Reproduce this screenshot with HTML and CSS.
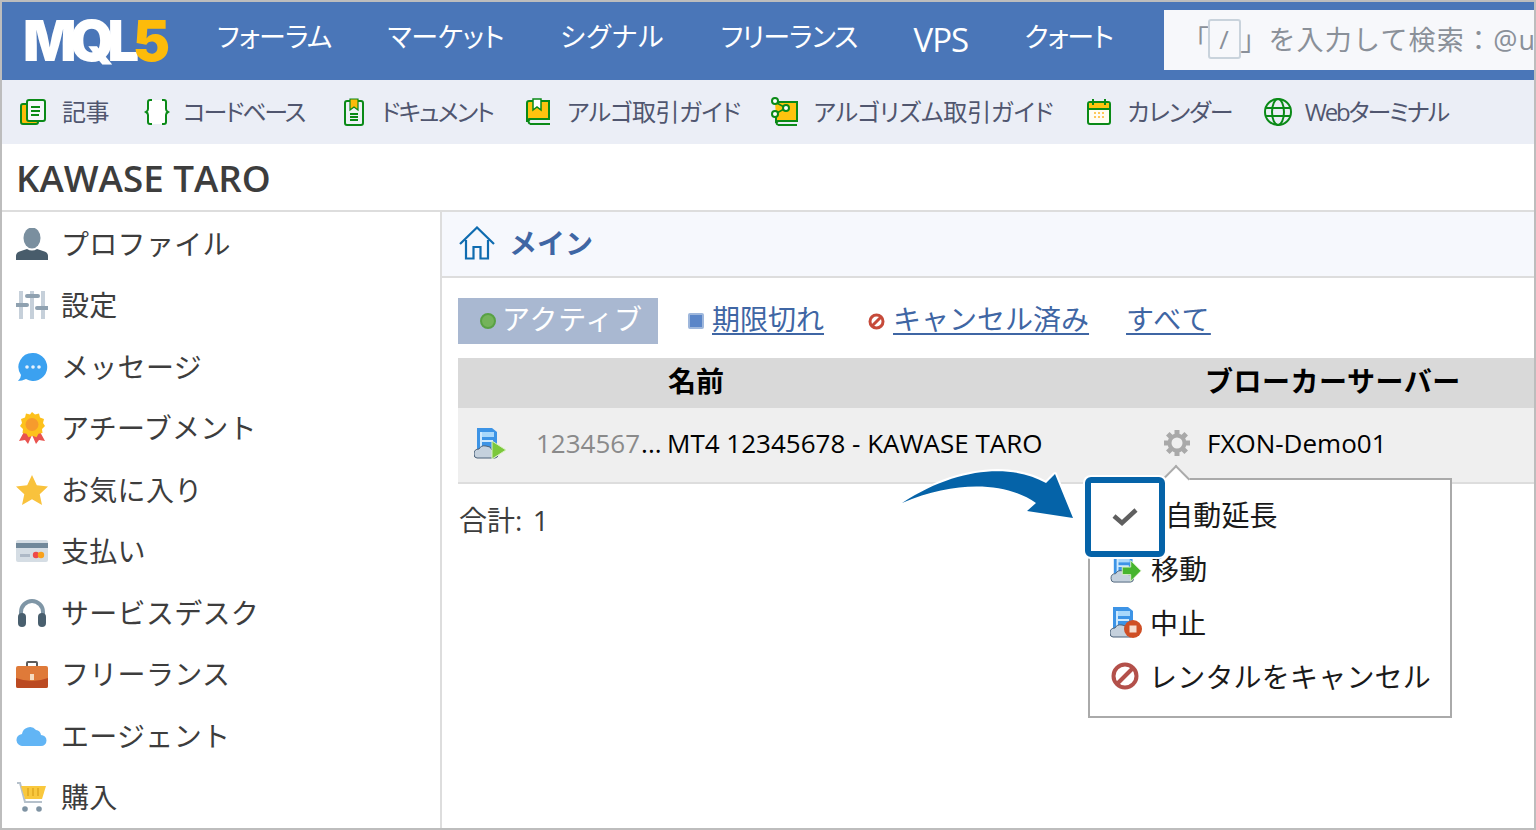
FILE: index.html
```html
<!DOCTYPE html>
<html lang="ja">
<head>
<meta charset="utf-8">
<title>MQL5 KAWASE TARO</title>
<link rel="stylesheet" href="styles.css">
</head>
<body>
<div class="frame">
  <header class="topbar">
    <div class="logo">MQL<span class="logo-five">5</span></div>
    <nav class="topnav">
      <a>フォーラム</a><a>マーケット</a><a>シグナル</a><a>フリーランス</a><a class="vps">VPS</a><a>クォート</a>
    </nav>
    <div class="search">「<span class="key">/</span>」を入力して検索：@username</div>
  </header>

  <nav class="subnav">
    <a><svg width="26" height="28" viewBox="0 0 26 28"><rect x="1" y="6" width="17" height="20" rx="2" fill="#fdbb0a" stroke="#0a8a17" stroke-width="2"/><rect x="7" y="2" width="18" height="21" rx="2" fill="#f4f6fb" stroke="#0a8a17" stroke-width="2"/><path d="M11 9h9M11 13h9M11 17h8" stroke="#0a8a17" stroke-width="2"/></svg>記事</a>
    <a><svg width="26" height="28" viewBox="0 0 26 28"><path d="M6 2q-2 0-2 2v7q0 2-2 3 2 1 2 3v7q0 2 2 2h14q2 0 2-2v-7q0-2 2-3-2-1-2-3V4q0-2-2-2z" fill="#fff"/><path d="M8 2H6Q4 2 4 4v7q0 2-2 3 2 1 2 3v7q0 2 2 2h2M18 2h2q2 0 2 2v7q0 2 2 3-2 1-2 3v7q0 2-2 2h-2" fill="none" stroke="#0a8a17" stroke-width="2"/></svg>コードベース</a>
    <a><svg width="20" height="28" viewBox="0 0 20 28"><rect x="1" y="3" width="18" height="24" rx="2" fill="#eef1f7" stroke="#0a8a17" stroke-width="2"/><path d="M6 1h8v11l-4-3-4 3z" fill="#fdbb0a" stroke="#0a8a17" stroke-width="1.200"/><path d="M6 16h8M6 19h8M6 22h8" stroke="#0a8a17" stroke-width="2"/></svg>ドキュメント</a>
    <a><svg width="25" height="28" viewBox="0 0 25 28"><path d="M3 3h20v18H4q-3 0-3 3V5q0-2 2-2z" fill="#fdc30f" stroke="#0a8a17" stroke-width="2"/><path d="M4 21h20M4 26h20M4 21q-3 2.500 0 5" fill="none" stroke="#0a8a17" stroke-width="2"/><path d="M7 1h8v11l-4-3-4 3z" fill="#fff" stroke="#0a8a17" stroke-width="1.500"/></svg>アルゴ取引ガイド</a>
    <a><svg width="28" height="30" viewBox="0 0 28 30"><path d="M5 5h22v19H9q-3 0-3 2v-6" fill="#fdc30f" stroke="#0a8a17" stroke-width="2"/><path d="M8 24h19M8 28h19M8 24q-3 2 0 4" fill="none" stroke="#0a8a17" stroke-width="2"/><path d="M5 5l11 6-11 6" fill="none" stroke="#0a8a17" stroke-width="1.500"/><g fill="#fff" stroke="#0a8a17" stroke-width="2"><circle cx="5" cy="4" r="3"/><circle cx="16" cy="11" r="3"/><circle cx="5" cy="17" r="3"/></g></svg>アルゴリズム取引ガイド</a>
    <a><svg width="24" height="28" viewBox="0 0 24 28"><rect x="1" y="4" width="22" height="22" rx="2" fill="#fffdf3" stroke="#0a8a17" stroke-width="2"/><path d="M2 5h20v6H2z" fill="#fdc30f"/><path d="M6 1v6M18 1v6M2 11h20" stroke="#0a8a17" stroke-width="2"/><path d="M7 15h2M11 15h2M15 15h2M7 19h2M11 19h2M15 19h2" stroke="#fdc85a" stroke-width="2"/></svg>カレンダー</a>
    <a><svg width="28" height="28" viewBox="0 0 28 28" fill="none" stroke="#0a8a17" stroke-width="2"><circle cx="14" cy="14" r="13"/><ellipse cx="14" cy="14" rx="6" ry="13"/><path d="M2 10h24M2 18h24"/></svg>Webターミナル</a>
  </nav>

  <h1 class="pagetitle">KAWASE TARO</h1>

  <div class="columns">
    <aside class="sidebar">
      <a><svg width="32" height="32" viewBox="0 0 32 32"><ellipse cx="16" cy="10" rx="8.500" ry="10.500" fill="#7a8f9f"/><path d="M0 32v-4q0-4 5-5l6-2q5 3 10 0l6 2q5 1 5 5v4z" fill="#485c6b"/></svg>プロファイル</a>
      <a><svg width="32" height="28" viewBox="0 0 32 28"><path d="M5 0v28M16 0v28M27 0v28" stroke="#c6d0da" stroke-width="4"/><path d="M0 14h11M11 5h11M21 17h11" stroke="#8fa1b0" stroke-width="4" stroke-linecap="round"/></svg>設定</a>
      <a><svg width="32" height="30" viewBox="0 0 32 30"><path d="M17 1a14 14 0 1 1-7 26q-4 2-8 2 3-3 3-6A14 14 0 0 1 17 1z" fill="#3ba1f0"/><circle cx="11" cy="15" r="1.800" fill="#e5f2fd"/><circle cx="17" cy="15" r="1.800" fill="#e5f2fd"/><circle cx="23" cy="15" r="1.800" fill="#e5f2fd"/></svg>メッセージ</a>
      <a><svg width="28" height="33" viewBox="0 0 28 33"><path d="M7 18L1 29l6-1 3 4 4-9 4 9 3-4 6 1-6-11z" fill="#e9534f"/><path d="M14 0l3 2.500 4-1 1 4 4 1.500-1 4 2 3-3 3 .5 4-4 .8-2 3.400-4-1.500-4 1.500-2-3.400-4-.8.500-4-3-3 2-3-1-4 4-1.500 1-4 4 1z" fill="#fdc11c"/><circle cx="14" cy="12.500" r="6.500" fill="#f69b2d"/></svg>アチーブメント</a>
      <a><svg width="32" height="30" viewBox="0 0 32 30"><path d="M16 0l4.800 10.300L32 11.500l-8.300 7.700L26 30l-10-5.700L6 30l2.300-10.800L0 11.500l11.200-1.200z" fill="#f9c23c"/></svg>お気に入り</a>
      <a><svg width="32" height="22" viewBox="0 0 32 22"><rect width="32" height="22" rx="2" fill="#d5dde4"/><rect y="3" width="32" height="5" fill="#71889a"/><rect x="4" y="14" width="10" height="3" fill="#aeb9c6"/><circle cx="20" cy="15" r="3.200" fill="#ee4b4b"/><circle cx="25" cy="15" r="3.200" fill="#f9a11b"/></svg>支払い</a>
      <a><svg width="30" height="28" viewBox="0 0 30 28"><path d="M4 16v-3a11 11 0 0 1 22 0v3" fill="none" stroke="#7f96a6" stroke-width="4"/><rect x="1" y="14" width="8" height="14" rx="4" fill="#495f6e"/><rect x="21" y="14" width="8" height="14" rx="4" fill="#495f6e"/></svg>サービスデスク</a>
      <a><svg width="32" height="27" viewBox="0 0 32 27"><path d="M11 5V2q0-1 1-1h8q1 0 1 1v3" fill="none" stroke="#5c5c5c" stroke-width="2"/><rect y="5" width="32" height="22" rx="2" fill="#df7a39"/><path d="M0 17q16 6 32 0v8q0 2-2 2H2q-2 0-2-2z" fill="#bb4a22"/><rect x="14" y="13" width="4" height="6" fill="#f6dcc0"/></svg>フリーランス</a>
      <a><svg width="30" height="20" viewBox="0 0 30 20"><path d="M6 20a6 6 0 0 1-1-12 8 8 0 0 1 14-4 6 6 0 0 1 5 5 5.500 5.500 0 0 1 0 11z" fill="#62b5f5"/></svg>エージェント</a>
      <a><svg width="32" height="30" viewBox="0 0 32 30"><path d="M1 1h3l5 19h17" fill="none" stroke="#b6c1cb" stroke-width="2"/><path d="M5 4h25l-4 13H9z" fill="#f9c83d"/><path d="M12 6v8M17 6v8M22 6v8" stroke="#e0a820" stroke-width="1.500"/><circle cx="9" cy="27" r="2.800" fill="#7f93a3"/><circle cx="23" cy="27" r="2.800" fill="#7f93a3"/></svg>購入</a>
    </aside>

    <main class="content">
      <div class="crumb"><svg width="36" height="34" viewBox="0 0 36 34" fill="none" stroke="#0f6cb0" stroke-width="2.200"><path d="M1 18L18 1.500 35 18M7 14v18.500h7.500V21h7v11.500H29V14"/></svg>メイン</div>

      <div class="panel">
        <div class="tabs">
          <span class="tab active"><i class="dot-green"></i>アクティブ</span>
          <a class="tab"><i class="dot-blue"></i><u>期限切れ</u></a>
          <a class="tab tab-cancel"><svg width="17" height="17" viewBox="0 0 17 17" fill="none" stroke="#c64a3a" stroke-width="3"><circle cx="8.500" cy="8.500" r="6.500"/><path d="M4 13l9-9"/></svg><u>キャンセル済み</u></a>
          <a class="tab tab-all"><u>すべて</u></a>
        </div>

        <div class="grid">
          <div class="th"></div><div class="th"></div><div class="th">名前</div><div class="th"></div><div class="th th-server">ブローカーサーバー</div>
          <div class="td td-ico"><svg width="32" height="32" viewBox="0 0 32 32"><use href="#vps"/><path d="M18 14l14 9-14 9z" fill="#7cc83c" stroke="#d9f0c4"/></svg></div>
          <div class="td"><span class="num">1234567</span>...</div>
          <div class="td">MT4 12345678 - KAWASE TARO</div>
          <div class="td"><svg width="28" height="28" viewBox="0 0 28 28"><path d="M14 1v5M14 22v5M1 14h5M22 14h5M4.800 4.800l3.500 3.500M19.700 19.700l3.500 3.500M23.200 4.800l-3.500 3.500M8.300 19.700l-3.500 3.500" stroke="#a9a9a9" stroke-width="5"/><circle cx="14" cy="14" r="7.500" fill="none" stroke="#a9a9a9" stroke-width="4"/></svg></div>
          <div class="td">FXON-Demo01</div>
        </div>
        <p class="total">合計: 1</p>
      </div>
    </main>
  </div>

  <div class="menu">
    <i class="caret"></i>
    <a class="menu-first">自動延長</a>
    <a><svg width="32" height="30" viewBox="0 0 32 32"><use href="#vps"/><path d="M12 15h9V8l11 11-11 11v-7h-9z" fill="#47b52e" stroke="#d9f0c4"/></svg>移動</a>
    <a class="menu-halt"><svg width="32" height="32" viewBox="0 0 32 32"><use href="#vps"/><circle cx="23" cy="23" r="9" fill="#cf4f25"/><rect x="19.500" y="19.500" width="7" height="7" fill="#f5ddd0"/></svg>中止</a>
    <a class="menu-stop"><svg width="28" height="28" viewBox="0 0 28 28" fill="none" stroke="#b3504a" stroke-width="4"><circle cx="14" cy="14" r="11.500"/><path d="M6 22L22 6"/></svg>レンタルをキャンセル</a>
  </div>

  <svg class="arrow" width="190" height="70" viewBox="0 0 190 70"><path d="M4 42C60 5 115 3 148 22L157 13 175 57 129 50 138 42C110 22 60 18 4 42z" fill="#0563a8" stroke="#fff" stroke-width="4" stroke-linejoin="round" paint-order="stroke"/></svg>
  <div class="highlight"><svg width="26" height="20" viewBox="0 0 26 20"><path d="M2 9l8 7L24 3" fill="none" stroke="#5f5f5f" stroke-width="4.500"/></svg></div>

  <svg class="defs" width="0" height="0"><defs><g id="vps"><path d="M3 1h15l5 4v17H3z" fill="#3d94e6"/><path d="M7 5h13v5H7z" fill="#a9d8fb"/><path d="M7 5v18M7 14h12" stroke="#cfe9fd" stroke-width="2"/><path d="M3 31q-3 0-3-4 0-5 5-5 2-4 7-3 5 0 6 4 6 0 6 4 0 4-3 4z" fill="#c5d1dd" stroke="#4a6078"/></g></defs></svg>
</div>
</body>
</html>
```

FILE: styles.css
```css
* { box-sizing: border-box; }
html, body { margin: 0; height: 100%; background: #fff; }
body {
  font-family: "Open Sans", "Noto Sans CJK JP", sans-serif;
  color: #3d3d3d;
  overflow: hidden;
}
.frame {
  position: relative;
  width: 1536px;
  height: 830px;
  border: 2px solid #bdbdbd;
  overflow: hidden;
  display: flex;
  flex-direction: column;
}
svg { flex: none; display: block; }

/* top bar */
.topbar {
  height: 78px;
  flex: none;
  background: #4a76b8;
  display: flex;
  align-items: center;
  padding-left: 21px;
  color: #fff;
}
.logo {
  width: 194px;
  flex: none;
  font-family: "Inter", sans-serif;
  font-weight: 900;
  font-size: 56px;
  letter-spacing: -6.500px;
  line-height: 1;
  color: #fff;
}
.logo-five { color: #fdbb0a; }
.topnav {
  display: flex;
  gap: 56px;
  font-size: 27px;
  font-feature-settings: "palt";
  letter-spacing: -0.500px;
  width: 947px;
  flex: none;
  margin-top: -7px;
}
.topnav a:nth-child(1) { letter-spacing: -0.700px; }
.topnav a:nth-child(2) { letter-spacing: -0.300px; }
.topnav a:nth-child(3) { letter-spacing: 1px; }
.topnav a:nth-child(4) { letter-spacing: -0.900px; }
.topnav a:nth-child(6) { letter-spacing: -1px; }
.topnav .vps { font-size: 33px; letter-spacing: -1px; line-height: 40px; margin-top: 4px; }
.search {
  flex: 1;
  align-self: flex-start;
  margin-top: 8px;
  height: 60px;
  background: #f7f8fb;
  color: #8a9099;
  font-size: 27px;
  letter-spacing: 1.200px;
  white-space: nowrap;
  overflow: hidden;
  display: flex;
  align-items: center;
  padding: 0 0 3px 18px;
}
.key {
  flex: none;
  display: flex;
  align-items: center;
  justify-content: center;
  width: 33px;
  height: 40px;
  margin-left: -2px;
  margin-right: -1px;
  border: 2px solid #c9d3dc;
  border-radius: 3px;
  font-size: 26px;
  font-family: "Open Sans", sans-serif;
}

/* secondary nav */
.subnav {
  height: 64px;
  flex: none;
  background: #ebeef6;
  display: flex;
  align-items: center;
  padding-left: 18px;
  font-size: 24px;
  font-feature-settings: "palt";
  color: #50566f;
}
.subnav a { display: flex; align-items: center; gap: 16px; white-space: nowrap; line-height: 28px; padding-bottom: 1px; }
.subnav svg { margin-top: 1px; }
.subnav a:nth-child(1) { letter-spacing: -0.500px; }
.subnav a:nth-child(2) { margin-left: 35px; gap: 13px; letter-spacing: -2.100px; }
.subnav a:nth-child(3) { margin-left: 40px; gap: 17px; letter-spacing: -1.800px; }
.subnav a:nth-child(4) { margin-left: 33px; letter-spacing: -0.500px; }
.subnav a:nth-child(5) { margin-left: 29px; letter-spacing: -0.200px; }
.subnav a:nth-child(6) { margin-left: 34px; letter-spacing: -1px; }
.subnav a:nth-child(7) { margin-left: 31px; gap: 13px; letter-spacing: -2.100px; }

.pagetitle {
  height: 66px;
  flex: none;
  margin: 0;
  padding-left: 14px;
  font-size: 36.800px;
  font-weight: 600;
  line-height: 68px;
  color: #3d3d3d;
}

.columns {
  flex: 1;
  min-height: 0;
  display: flex;
  border-top: 2px solid #ddd;
}
.sidebar {
  width: 440px;
  flex: none;
  border-right: 2px solid #ddd;
  font-size: 28px;
  letter-spacing: 0.300px;
  padding-top: 1px;
}
.sidebar a {
  height: 61.500px;
  display: flex;
  align-items: center;
  gap: 15px;
  padding-left: 14px;
  white-space: nowrap;
  line-height: 40px;
  text-indent: -2px;
}
.sidebar svg { width: 32px; }

.content { flex: 1; min-width: 0; }
.crumb {
  height: 66px;
  background: #f6f8fd;
  border-bottom: 2px solid #ddd;
  display: flex;
  align-items: center;
  gap: 14px;
  padding: 0 0 3px 17px;
  font-size: 28px;
  font-weight: 700;
  color: #3f66a4;
  line-height: 36px;
}
.panel { padding: 20px 0 0 16px; }
.tabs { display: flex; align-items: center; font-size: 28px; height: 46px; color: #3f66a4; }
.tab { display: flex; align-items: center; gap: 8px; white-space: nowrap; margin-left: 30px; padding-bottom: 5px; line-height: 38px; }
.tab.active {
  margin-left: 0;
  width: 200px;
  height: 46px;
  background: #a9b8d1;
  color: #fff;
  padding-left: 22px;
  gap: 6px;
  letter-spacing: 0.800px;
}
.tab.tab-cancel { margin-left: 44px; }
.tab.tab-all { margin-left: 37px; letter-spacing: 1.300px; }
.tab u { text-underline-offset: 3px; text-decoration-thickness: 2px; }
.dot-green { width: 16px; height: 16px; border-radius: 50%; background: #74b35a; border: 2px solid #58a143; margin-top: 5px; }
.dot-blue { width: 16px; height: 16px; border-radius: 2px; background: #5b86c8; border: 2px solid #9eb7dc; margin-top: 5px; }
.tab svg { margin-top: 5px; }

.grid {
  margin-top: 14px;
  display: grid;
  grid-template-columns: 79px 131px 495px 45px 1fr;
  grid-template-rows: 50px 76px;
  color: #000;
}
.th {
  background: #d9d9d9;
  font-size: 28px;
  font-weight: 700;
  line-height: 46px;
  letter-spacing: -0.100px;
  white-space: nowrap;
}
.th-server { letter-spacing: 0.500px; text-indent: -3px; }
.td {
  background: #efefef;
  border-bottom: 2px solid #ddd;
  display: flex;
  align-items: center;
  padding-bottom: 4px;
  font-size: 26px;
  white-space: nowrap;
  text-indent: -1px;
}
.td-ico { padding-left: 16px; }
.num { color: #8a8a8a; margin-right: 2px; }
.total { margin: 16px 0 0 1px; font-size: 28px; line-height: 40px; word-spacing: 3px; color: #3d3d3d; }

/* popup menu and its annotation */
.menu {
  position: absolute;
  left: 1086px;
  top: 476px;
  width: 364px;
  height: 240px;
  background: #fff;
  border: 2px solid #aaa;
  padding: 7px 0 0 20px;
  font-size: 28px;
  letter-spacing: 0.200px;
  color: #1a1a1a;
}
.menu a { height: 54px; display: flex; align-items: center; gap: 9px; white-space: nowrap; }
.menu a svg { width: 32px; }
.menu .menu-first { padding-left: 55px; }
.menu .menu-halt { gap: 8px; }
.menu .menu-stop svg { width: 28px; margin-right: 2px; }
.menu .menu-stop { gap: 8px; padding-left: 1px; }
.caret {
  position: absolute;
  left: 76px;
  top: -11px;
  width: 20px;
  height: 20px;
  background: #fff;
  border-left: 2px solid #aaa;
  border-top: 2px solid #aaa;
  transform: rotate(45deg);
}
.arrow { position: absolute; left: 896px; top: 459px; }
.highlight {
  position: absolute;
  left: 1083px;
  top: 475px;
  width: 80px;
  height: 80px;
  border: 6px solid #0563a8;
  border-radius: 6px;
  background: #fff;
  box-shadow: 0 0 0 2px #fff;
  display: flex;
  align-items: center;
  justify-content: center;
}
.defs { position: absolute; }
```
